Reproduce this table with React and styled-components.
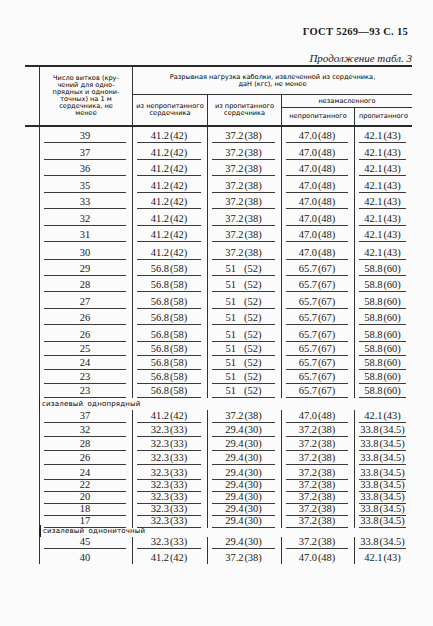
import React from 'react'
import styled, { createGlobalStyle } from 'styled-components'

const GlobalStyle = createGlobalStyle`
  html, body {
    margin: 0;
    padding: 0;
    background: #fbfbfb;
  }
  body {
    font-family: "Liberation Serif", serif;
    color: #1a1a1a;
  }
`

const Page = styled.div`
  width: 433px;
  height: 626px;
  padding-top: 26px;
  box-sizing: border-box;
`

const Title = styled.div`
  text-align: right;
  padding-right: 25px;
  font-family: "Liberation Serif", serif;
  font-weight: bold;
  font-size: 10.5px;
  line-height: 12px;
  letter-spacing: 0.3px;
`

const Caption = styled.div`
  margin-top: 14px;
  text-align: right;
  padding-right: 21px;
  font-style: italic;
  font-size: 11px;
  line-height: 12px;
`

const Table = styled.div`
  margin: 1px 0 0 25px;
  width: 387px;
  border-top: 2px solid #2a2a2a;
`

const Head = styled.div`
  display: grid;
  grid-template-columns: 14px 93px 75px 74px 73px 58px;
  grid-template-rows: 28px 13px 17px;
  border-bottom: 2px solid #2a2a2a;
  font-family: "DejaVu Sans", sans-serif;
  font-size: 6.6px;
  line-height: 7px;
  color: #000;
`

const HCell = styled.div`
  grid-column: ${p => p.$col};
  grid-row: ${p => p.$row};
  border-left: 1px solid #333;
  border-bottom: ${p => (p.$under ? '1px solid #333' : 'none')};
  display: flex;
  align-items: center;
  justify-content: center;
  text-align: center;
  padding: 0 2px;
  white-space: pre-line;
`

const Body = styled.div`
  padding-left: 14px;
`

const Row = styled.div`
  display: grid;
  grid-template-columns: 93px 75px 74px 73px 58px;
  height: ${p => p.$h}px;
`

const Cell = styled.div`
  border-left: 1px solid #333;
  padding: 0 6px 0 4px;
  display: flex;
`

const Value = styled.div`
  flex: 1;
  display: flex;
  align-items: flex-end;
  justify-content: center;
  padding-bottom: 1px;
  font-size: 10.5px;
  line-height: 10px;
  white-space: pre;
  border-bottom: ${p => (p.$last ? 'none' : '1px solid #3a3a3a')};
`

const Label = styled.div`
  height: ${p => p.$h}px;
  border-left: ${p => (p.$bold ? '2px' : '1px')} solid #222;
  display: flex;
  align-items: center;
  padding-left: 2px;
  font-family: "DejaVu Sans", sans-serif;
  font-size: 7px;
  color: #000;
  letter-spacing: 0.2px;
  word-spacing: 2px;
`

const A = ['41.2\u200a(42)', '37.2\u200a(38)', '47.0\u200a(48)', '42.1\u200a(43)']
const B = ['56.8\u200a(58)', '51\u00a0\u00a0\u00a0(52)', '65.7\u200a(67)', '58.8\u200a(60)']
const C = ['32.3\u200a(33)', '29.4\u200a(30)', '37.2\u200a(38)', '33.8\u200a(34.5)']

const rows = [
  { n: '39', v: A, h: 16 },
  { n: '37', v: A, h: 17 },
  { n: '36', v: A, h: 16 },
  { n: '35', v: A, h: 17 },
  { n: '33', v: A, h: 16 },
  { n: '32', v: A, h: 17 },
  { n: '31', v: A, h: 16 },
  { n: '30', v: A, h: 18 },
  { n: '29', v: B, h: 16 },
  { n: '28', v: B, h: 16 },
  { n: '27', v: B, h: 17 },
  { n: '26', v: B, h: 16 },
  { n: '26', v: B, h: 17 },
  { n: '25', v: B, h: 14 },
  { n: '24', v: B, h: 14 },
  { n: '23', v: B, h: 14 },
  { n: '23', v: B, h: 14 },
  { label: 'сизалевый однопрядный', h: 12 },
  { n: '37', v: A, h: 13 },
  { n: '32', v: C, h: 14 },
  { n: '28', v: C, h: 14 },
  { n: '26', v: C, h: 14 },
  { n: '24', v: C, h: 15 },
  { n: '22', v: C, h: 12 },
  { n: '20', v: C, h: 12 },
  { n: '18', v: C, h: 12 },
  { n: '17', v: C, h: 9 },
  { label: 'сизалевый однониточный', h: 12, bold: true },
  { n: '45', v: C, h: 12 },
  { n: '40', v: A, h: 15, last: true },
]

export default function App() {
  return (
    <>
      <GlobalStyle />
      <Page>
        <Title>ГОСТ 5269—93 С. 15</Title>
        <Caption>Продолжение табл. 3</Caption>
        <Table>
          <Head>
            <HCell $col="2" $row="1 / 4">
              {'Число витков (кру-\nчений для одно-\nпрядных и однони-\nточных) на 1 м\nсердечника, не\nменее'}
            </HCell>
            <HCell $col="3 / 7" $row="1" $under>
              {'Разрывная нагрузка каболки, извлеченной из сердечника,\nдаН (кгс), не менее'}
            </HCell>
            <HCell $col="3" $row="2 / 4">{'из непропитанного\nсердечника'}</HCell>
            <HCell $col="4" $row="2 / 4">{'из пропитанного\nсердечника'}</HCell>
            <HCell $col="5 / 7" $row="2" $under>незамасленного</HCell>
            <HCell $col="5" $row="3">непропитанного</HCell>
            <HCell $col="6" $row="3">пропитанного</HCell>
          </Head>
          <Body>
            {rows.map((r, i) =>
              r.label ? (
                <Label key={i} $h={r.h} $bold={r.bold}>{r.label}</Label>
              ) : (
                <Row key={i} $h={r.h}>
                  <Cell><Value $last={r.last}>{r.n}</Value></Cell>
                  {r.v.map((v, j) => (
                    <Cell key={j}><Value $last={r.last}>{v}</Value></Cell>
                  ))}
                </Row>
              )
            )}
          </Body>
        </Table>
      </Page>
    </>
  )
}
